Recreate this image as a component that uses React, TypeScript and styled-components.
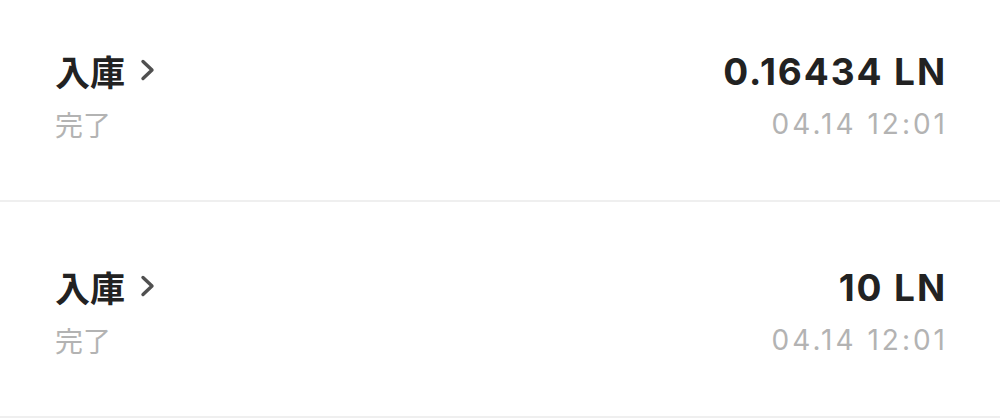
import React from 'react'
import styled, { createGlobalStyle } from 'styled-components'

const Global = createGlobalStyle`
  body {
    margin: 0;
    background: #ffffff;
    font-family: Inter, "Noto Sans CJK JP", sans-serif;
    overflow: hidden;
  }
`

type Record = { kind: string; status: string; amount: string; time: string }

const records: Record[] = [
  { kind: '入庫', status: '完了', amount: '0.16434 LN', time: '04.14 12:01' },
  { kind: '入庫', status: '完了', amount: '10 LN', time: '04.14 12:01' },
]

const App = () => {
  return (
    <>
      <Global />
      <List>
        {records.map((r, i) => (
          <Row key={i}>
            <Left>
              <Title>
                {r.kind}
                <Chevron viewBox="0 0 18 24">
                  <path d="M4 3.5 L13 12 L4 20.5" />
                </Chevron>
              </Title>
              <Status>{r.status}</Status>
            </Left>
            <Right>
              <Amount>{r.amount}</Amount>
              <Time>{r.time}</Time>
            </Right>
          </Row>
        ))}
      </List>
    </>
  )
}

export default App

const List = styled.div`
  margin-top: -14px;
  display: flex;
  flex-direction: column;
`

const Row = styled.div`
  display: flex;
  justify-content: space-between;
  padding: 62px 55px 56px 55px;
  border-bottom: 2px solid #efefef;
`

const Left = styled.div`
  display: flex;
  flex-direction: column;
  gap: 8px;
`

const Right = styled.div`
  display: flex;
  flex-direction: column;
  align-items: flex-end;
  gap: 8px;
`

const Title = styled.div`
  display: flex;
  align-items: center;
  height: 48px;
  margin-top: -2px;
  font-family: "Noto Sans CJK JP", sans-serif;
  font-size: 35px;
  font-weight: 700;
  color: #222222;
`

const Chevron = styled.svg`
  width: 18px;
  height: 24px;
  margin-left: 14px;
  fill: none;
  stroke: #505050;
  stroke-width: 3.4;
  stroke-linecap: round;
  stroke-linejoin: round;
`

const Status = styled.div`
  height: 40px;
  line-height: 40px;
  margin-top: 2px;
  font-family: "Noto Sans CJK JP", sans-serif;
  font-size: 28px;
  color: #b3b3b3;
`

const Amount = styled.div`
  height: 48px;
  line-height: 48px;
  margin-right: -2px;
  font-family: Inter, sans-serif;
  font-size: 37px;
  font-weight: 700;
  letter-spacing: 1.9px;
  color: #222222;
`

const Time = styled.div`
  height: 40px;
  line-height: 40px;
  margin-right: -3px;
  font-family: Inter, sans-serif;
  font-size: 28px;
  letter-spacing: 3px;
  color: #b3b3b3;
`
